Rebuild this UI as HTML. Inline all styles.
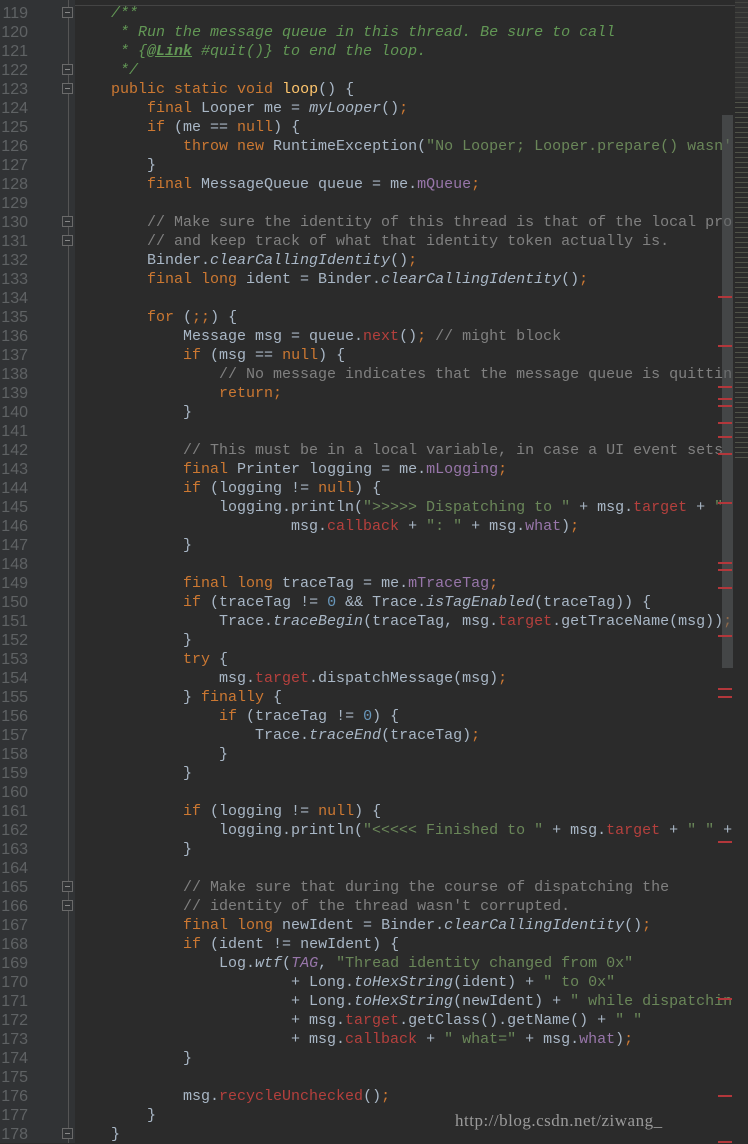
<!DOCTYPE html>
<html><head><meta charset="utf-8"><style>
body{margin:0;width:748px;height:1143px;background:#2b2b2b;overflow:hidden;position:relative;font-family:"Liberation Mono",monospace;}
#g{position:absolute;left:0;top:0;width:75px;height:1143px;background:#313335;}
#fl{position:absolute;left:68px;top:0;width:1px;height:1143px;background:#555;}
.ln{position:absolute;left:0;width:28px;text-align:right;color:#5f6264;font:16px/19px "Liberation Sans",sans-serif;}
pre{position:absolute;left:75px;top:3.5px;margin:0;font:15px/19px "Liberation Mono",monospace;color:#a9b7c6;}
.k{color:#cc7832}.s{color:#6a8759}.c{color:#808080}.d{color:#629755;font-style:italic}.f{color:#9876aa}.n{color:#6897bb}.i{font-style:italic}.fi{color:#9876aa;font-style:italic}.r{color:#b5403d}
.fold{position:absolute;left:62px;width:11px;height:11px;border:1px solid #6a6a6a;box-sizing:border-box;background:#313335;}
.fold:after{content:"";position:absolute;left:2px;top:4px;width:5px;height:1px;background:#888;}
.m{position:absolute;left:718px;width:14px;height:2px;background:#b3373b;}
</style></head><body>
<div id="g"></div><div id="fl"></div>
<div style="position:absolute;left:75px;top:5px;width:660px;height:1px;background:#444"></div>
<div class="fold" style="top:7px"></div><div class="fold" style="top:64px"></div><div class="fold" style="top:83px"></div>
<div class="fold" style="top:216px"></div><div class="fold" style="top:235px"></div>
<div class="fold" style="top:881px"></div><div class="fold" style="top:900px"></div><div class="fold" style="top:1128px"></div>
<div id="nums"></div>
<pre><span class="d">    /**
     * Run the message queue in this thread. Be sure to call
     * {<b style="text-decoration:underline">@Link</b> #quit()} to end the loop.
     */</span>
    <span class="k">public static void</span> <span style="color:#ffc66d">loop</span>() {
        <span class="k">final</span> Looper me = <span class="i">myLooper</span>()<span class="k">;</span>
        <span class="k">if</span> (me == <span class="k">null</span>) {
            <span class="k">throw new</span> RuntimeException(<span class="s">"No Looper; Looper.prepare() wasn'</span>
        }
        <span class="k">final</span> MessageQueue queue = me.<span class="f">mQueue</span><span class="k">;</span>

        <span class="c">// Make sure the identity of this thread is that of the local pro</span>
        <span class="c">// and keep track of what that identity token actually is.</span>
        Binder.<span class="i">clearCallingIdentity</span>()<span class="k">;</span>
        <span class="k">final long</span> ident = Binder.<span class="i">clearCallingIdentity</span>()<span class="k">;</span>

        <span class="k">for</span> (<span class="k">;;</span>) {
            Message msg = queue.<span class="r">next</span>()<span class="k">;</span> <span class="c">// might block</span>
            <span class="k">if</span> (msg == <span class="k">null</span>) {
                <span class="c">// No message indicates that the message queue is quittin</span>
                <span class="k">return;</span>
            }

            <span class="c">// This must be in a local variable, in case a UI event sets</span>
            <span class="k">final</span> Printer logging = me.<span class="f">mLogging</span><span class="k">;</span>
            <span class="k">if</span> (logging != <span class="k">null</span>) {
                logging.println(<span class="s">"&gt;&gt;&gt;&gt;&gt; Dispatching to "</span> + msg.<span class="r">target</span> + <span class="s">"</span>
                        msg.<span class="r">callback</span> + <span class="s">": "</span> + msg.<span class="f">what</span>)<span class="k">;</span>
            }

            <span class="k">final long</span> traceTag = me.<span class="f">mTraceTag</span><span class="k">;</span>
            <span class="k">if</span> (traceTag != <span class="n">0</span> &amp;&amp; Trace.<span class="i">isTagEnabled</span>(traceTag)) {
                Trace.<span class="i">traceBegin</span>(traceTag, msg.<span class="r">target</span>.getTraceName(msg))<span class="k">;</span>
            }
            <span class="k">try</span> {
                msg.<span class="r">target</span>.dispatchMessage(msg)<span class="k">;</span>
            } <span class="k">finally</span> {
                <span class="k">if</span> (traceTag != <span class="n">0</span>) {
                    Trace.<span class="i">traceEnd</span>(traceTag)<span class="k">;</span>
                }
            }

            <span class="k">if</span> (logging != <span class="k">null</span>) {
                logging.println(<span class="s">"&lt;&lt;&lt;&lt;&lt; Finished to "</span> + msg.<span class="r">target</span> + <span class="s">" "</span> +
            }

            <span class="c">// Make sure that during the course of dispatching the</span>
            <span class="c">// identity of the thread wasn't corrupted.</span>
            <span class="k">final long</span> newIdent = Binder.<span class="i">clearCallingIdentity</span>()<span class="k">;</span>
            <span class="k">if</span> (ident != newIdent) {
                Log.<span class="i">wtf</span>(<span class="fi">TAG</span>, <span class="s">"Thread identity changed from 0x"</span>
                        + Long.<span class="i">toHexString</span>(ident) + <span class="s">" to 0x"</span>
                        + Long.<span class="i">toHexString</span>(newIdent) + <span class="s">" while dispatchin</span>
                        + msg.<span class="r">target</span>.getClass().getName() + <span class="s">" "</span>
                        + msg.<span class="r">callback</span> + <span class="s">" what="</span> + msg.<span class="f">what</span>)<span class="k">;</span>
            }

            msg.<span class="r">recycleUnchecked</span>()<span class="k">;</span>
        }
    }</pre>
<div style="position:absolute;left:722px;top:115px;width:11px;height:553px;background:rgba(90,92,94,.55)"></div>
<div style="position:absolute;left:735px;top:0;width:13px;height:460px;background:repeating-linear-gradient(#2b2b2b 0 2px,#5a5d50 2px 3px,#2b2b2b 3px 5px);opacity:.8"></div>
<div style="position:absolute;left:735px;top:0;width:13px;height:100px;background:#3a3a3a;opacity:.5"></div>
<div class="m" style="top:296px"></div><div class="m" style="top:345px"></div><div class="m" style="top:386px"></div><div class="m" style="top:398px"></div><div class="m" style="top:405px"></div><div class="m" style="top:422px"></div><div class="m" style="top:436px"></div><div class="m" style="top:453px"></div><div class="m" style="top:502px"></div><div class="m" style="top:562px"></div><div class="m" style="top:569px"></div><div class="m" style="top:587px"></div><div class="m" style="top:635px"></div><div class="m" style="top:688px"></div><div class="m" style="top:696px"></div><div class="m" style="top:841px"></div><div class="m" style="top:998px"></div><div class="m" style="top:1095px"></div><div class="m" style="top:1141px"></div>
<div style="position:absolute;left:455px;top:1111px;font:17px 'Liberation Serif',serif;color:#9a9a9a;letter-spacing:0.5px">http://blog.csdn.net/ziwang_</div>
<script>
var h='';for(var n=119;n<=178;n++){h+='<div class="ln" style="top:'+(3.5+(n-119)*19)+'px">'+n+'</div>';}
document.getElementById('nums').innerHTML=h;
</script>
</body></html>
